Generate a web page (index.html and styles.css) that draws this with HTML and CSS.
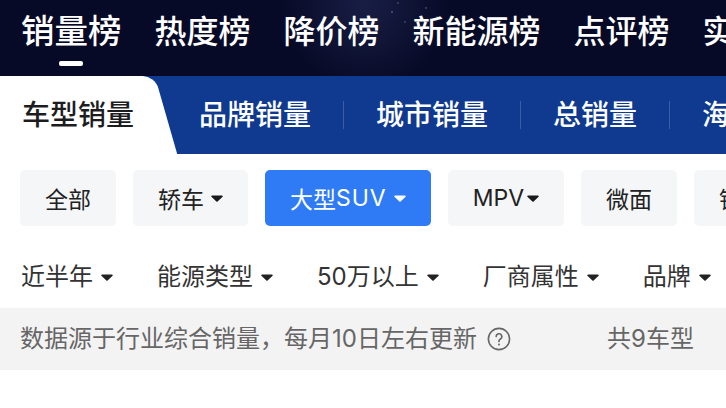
FILE: index.html
```html
<!DOCTYPE html>
<html lang="zh-CN">
<head>
    <meta charset="UTF-8">
    <meta name="viewport" content="width=device-width, initial-scale=1.0">
    <title>销量榜</title>
    <link rel="stylesheet" href="styles.css">
</head>
<body>
    <div class="page">
        <header class="rank-nav">
            <a class="rank-tab active">销量榜</a>
            <a class="rank-tab">热度榜</a>
            <a class="rank-tab">降价榜</a>
            <a class="rank-tab">新能源榜</a>
            <a class="rank-tab">点评榜</a>
            <a class="rank-tab">实时榜</a>
        </header>

        <nav class="sales-tabs">
            <div class="sales-tab current"><span>车型销量</span></div>
            <div class="sales-tab">品牌销量</div>
            <span class="sep"></span>
            <div class="sales-tab">城市销量</div>
            <span class="sep"></span>
            <div class="sales-tab">总销量</div>
            <span class="sep"></span>
            <div class="sales-tab">海外销量</div>
        </nav>

        <div class="chips">
            <div class="chip">全部</div>
            <div class="chip">轿车<svg class="caret" viewBox="0 0 12 7"><path d="M1 0.5h10a0.8 0.8 0 0 1 0.6 1.3L6.6 6.4a0.8 0.8 0 0 1-1.2 0L0.4 1.8A0.8 0.8 0 0 1 1 0.5z"/></svg></div>
            <div class="chip selected">大型<span class="latin">SUV</span><svg class="caret" viewBox="0 0 12 7"><path d="M1 0.5h10a0.8 0.8 0 0 1 0.6 1.3L6.6 6.4a0.8 0.8 0 0 1-1.2 0L0.4 1.8A0.8 0.8 0 0 1 1 0.5z"/></svg></div>
            <div class="chip">MPV<svg class="caret tight" viewBox="0 0 12 7"><path d="M1 0.5h10a0.8 0.8 0 0 1 0.6 1.3L6.6 6.4a0.8 0.8 0 0 1-1.2 0L0.4 1.8A0.8 0.8 0 0 1 1 0.5z"/></svg></div>
            <div class="chip">微面</div>
            <div class="chip">钢炮</div>
        </div>

        <div class="filters">
            <div class="filter">近半年<svg class="caret" viewBox="0 0 12 7"><path d="M1 0.5h10a0.8 0.8 0 0 1 0.6 1.3L6.6 6.4a0.8 0.8 0 0 1-1.2 0L0.4 1.8A0.8 0.8 0 0 1 1 0.5z"/></svg></div>
            <div class="filter">能源类型<svg class="caret" viewBox="0 0 12 7"><path d="M1 0.5h10a0.8 0.8 0 0 1 0.6 1.3L6.6 6.4a0.8 0.8 0 0 1-1.2 0L0.4 1.8A0.8 0.8 0 0 1 1 0.5z"/></svg></div>
            <div class="filter">50万以上<svg class="caret" viewBox="0 0 12 7"><path d="M1 0.5h10a0.8 0.8 0 0 1 0.6 1.3L6.6 6.4a0.8 0.8 0 0 1-1.2 0L0.4 1.8A0.8 0.8 0 0 1 1 0.5z"/></svg></div>
            <div class="filter">厂商属性<svg class="caret" viewBox="0 0 12 7"><path d="M1 0.5h10a0.8 0.8 0 0 1 0.6 1.3L6.6 6.4a0.8 0.8 0 0 1-1.2 0L0.4 1.8A0.8 0.8 0 0 1 1 0.5z"/></svg></div>
            <div class="filter">品牌<svg class="caret" viewBox="0 0 12 7"><path d="M1 0.5h10a0.8 0.8 0 0 1 0.6 1.3L6.6 6.4a0.8 0.8 0 0 1-1.2 0L0.4 1.8A0.8 0.8 0 0 1 1 0.5z"/></svg></div>
        </div>

        <div class="notice">
            <div class="notice-text">
                数据源于行业综合销量，每月10日左右更新
                <svg class="help" viewBox="0 0 24 24">
                    <circle cx="12" cy="12" r="10.6" fill="none" stroke="#666" stroke-width="1.6"/>
                    <path d="M9.2 9.6a2.8 2.8 0 1 1 4.2 2.4c-0.9 0.5-1.4 1-1.4 2v0.6" fill="none" stroke="#666" stroke-width="1.6" stroke-linecap="round"/>
                    <circle cx="12" cy="17.4" r="1" fill="#666"/>
                </svg>
            </div>
            <div class="notice-count">共9车型</div>
        </div>
    </div>
</body>
</html>
```

FILE: styles.css
```css
body {
    margin: 0;
    padding: 0;
    background-color: #fff;
    font-family: Inter, "Noto Sans CJK SC", sans-serif;
}

.page {
    width: 726px;
    overflow: hidden;
}

/* top ranking nav, with a faint starry glow */
.rank-nav {
    height: 76px;
    display: flex;
    gap: 33px;
    padding-left: 21px;
    white-space: nowrap;
    overflow: hidden;
    background-color: #070a26;
    background-image:
        radial-gradient(circle 1px at 392px 12px, rgba(255, 255, 255, 0.7), transparent),
        radial-gradient(circle 1px at 426px 8px, rgba(255, 255, 255, 0.6), transparent),
        radial-gradient(circle 1px at 405px 22px, rgba(255, 255, 255, 0.5), transparent),
        radial-gradient(circle 1px at 437px 17px, rgba(255, 255, 255, 0.5), transparent),
        radial-gradient(circle 1px at 398px 3px, rgba(255, 255, 255, 0.5), transparent),
        radial-gradient(circle 85px at 365px 5px, rgba(70, 80, 150, 0.28), transparent);
}

.rank-tab {
    position: relative;
    flex: none;
    font-size: 32px;
    line-height: 1;
    padding-top: 16px;
    color: #fff;
    font-weight: 500;
}

.rank-tab.active {
    font-size: 33.5px;
    padding-top: 15px;
}

.rank-tab.active::after {
    content: "";
    position: absolute;
    left: 50%;
    top: 61px;
    width: 24px;
    height: 5px;
    margin-left: -12px;
    border-radius: 2px;
    background-color: #fff;
}

/* sales type tabs */
.sales-tabs {
    height: 78px;
    display: flex;
    align-items: center;
    white-space: nowrap;
    overflow: hidden;
    background-color: #103a8f;
    position: relative;
    z-index: 0;
}

.sales-tab {
    flex: none;
    padding: 0 32px;
    font-size: 28px;
    line-height: 1;
    color: #fff;
    font-weight: 500;
}

.sales-tab.current {
    position: relative;
    align-self: stretch;
    display: flex;
    align-items: center;
    padding: 0 33px 0 22px;
    color: #1d1d1f;
}

/* white tab with slanted right edge */
.sales-tab.current::before {
    content: "";
    position: absolute;
    left: -40px;
    top: 0;
    bottom: 0;
    width: 206px;
    background-color: #fff;
    border-top-right-radius: 12px;
    transform: skewX(16deg);
    z-index: -1;
}

.sep {
    flex: none;
    width: 1px;
    height: 28px;
    background-color: rgba(255, 255, 255, 0.18);
}

/* car type chips */
.chips {
    display: flex;
    gap: 17px;
    padding: 16px 0 0 20px;
    white-space: nowrap;
    overflow: hidden;
}

.chip {
    flex: none;
    height: 56px;
    display: flex;
    align-items: center;
    padding: 0 25px;
    border-radius: 5px;
    background-color: #f5f6f8;
    font-size: 23px;
    color: #222;
}

.chip .latin {
    letter-spacing: 1px;
}

.chip.selected {
    background-color: #2f7bf5;
    color: #fff;
}

.caret {
    width: 12px;
    height: 7px;
    margin-left: 7px;
    fill: #1a1a1a;
}

.caret.tight {
    margin-left: 3px;
}

.chip.selected .caret {
    fill: #fff;
}

/* filter dropdowns */
.filters {
    height: 82px;
    display: flex;
    align-items: center;
    gap: 44px;
    padding: 20px 0 0 21px;
    box-sizing: border-box;
    white-space: nowrap;
    overflow: hidden;
}

.filter {
    flex: none;
    display: flex;
    align-items: center;
    font-size: 24px;
    line-height: 1;
    color: #333;
}

.filter .caret {
    margin-left: 8px;
    fill: #222;
}

/* data source notice */
.notice {
    height: 62px;
    display: flex;
    align-items: center;
    justify-content: space-between;
    padding: 0 32px 0 20px;
    background-color: #f3f3f3;
    font-size: 24px;
    line-height: 1;
    color: #666;
}

.notice-text {
    display: flex;
    align-items: center;
}

.help {
    width: 24px;
    height: 24px;
    margin-left: 10px;
}
```
